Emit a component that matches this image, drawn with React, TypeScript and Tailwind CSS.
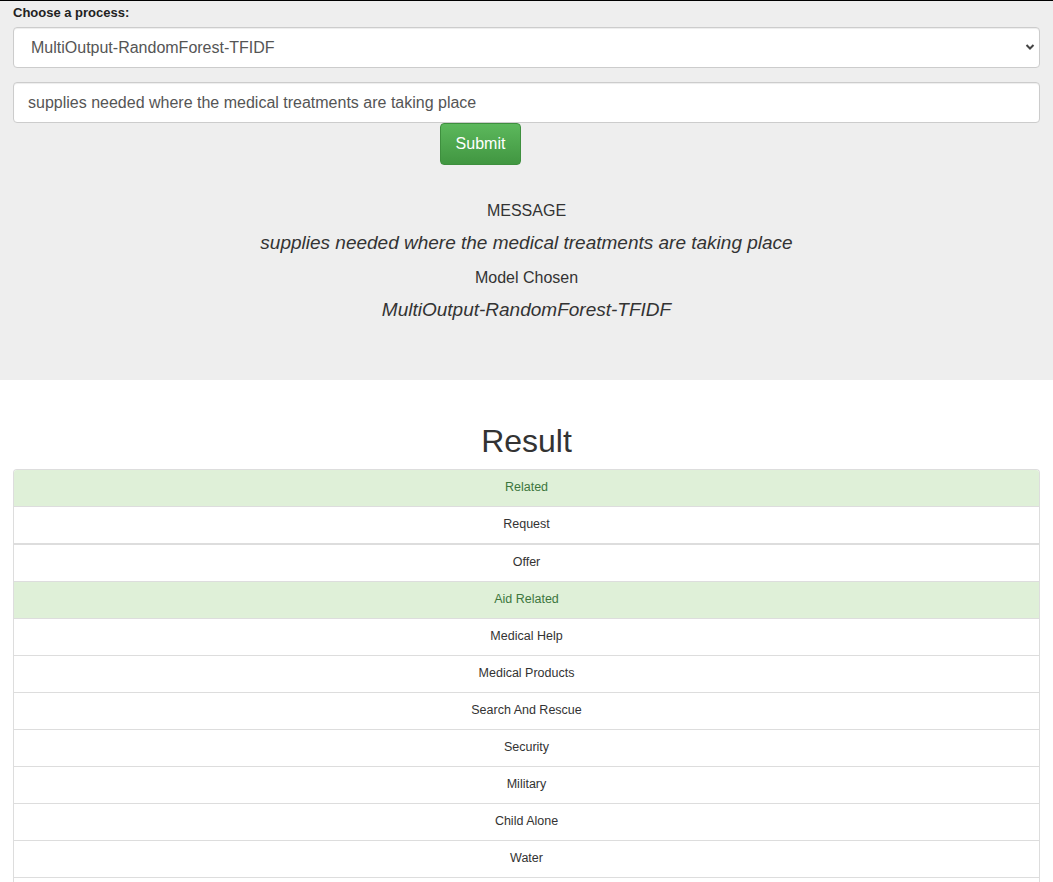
const categories = [
  { name: 'Related', hit: true },
  { name: 'Request', hit: false },
  { name: 'Offer', hit: false },
  { name: 'Aid Related', hit: true },
  { name: 'Medical Help', hit: false },
  { name: 'Medical Products', hit: false },
  { name: 'Search And Rescue', hit: false },
  { name: 'Security', hit: false },
  { name: 'Military', hit: false },
  { name: 'Child Alone', hit: false },
  { name: 'Water', hit: false },
  { name: 'Food', hit: false },
]

export default function App() {
  const message = 'supplies needed where the medical treatments are taking place'
  const model = 'MultiOutput-RandomForest-TFIDF'

  return (
    <div className="min-h-screen bg-white text-[#333] font-['Liberation_Sans',Arial,sans-serif]">
      <div className="bg-[#eeeeee] border-t border-black h-[380px] px-[13px]">
        <label className="block pt-[3px] text-[13px] font-bold leading-[18px] text-[#222]">Choose a process:</label>

        <div className="mt-[5px] relative">
          <select
            defaultValue={model}
            className="w-full h-[41px] appearance-none bg-white border border-[#ccc] rounded-[4px] pl-[17px] pr-8 text-[16px] text-[#555] shadow-[inset_0_1px_1px_rgba(0,0,0,0.075)] outline-none"
          >
            <option>{model}</option>
          </select>
          <svg
            className="absolute right-[5px] top-[16px] pointer-events-none"
            width="10"
            height="8"
            viewBox="0 0 10 8"
          >
            <path d="M1.5 2 L5 5.5 L8.5 2" stroke="#444" strokeWidth="2" fill="none" />
          </svg>
        </div>

        <input
          defaultValue={message}
          className="block w-full mt-[14px] h-[41px] bg-white border border-[#ccc] rounded-[4px] px-[14px] text-[16px] text-[#555] shadow-[inset_0_1px_1px_rgba(0,0,0,0.075)] outline-none"
        />

        <button className="ml-[427px] h-[42px] w-[81px] rounded-[4px] border border-[#3e8f3e] bg-gradient-to-b from-[#5cb85c] to-[#419641] text-white text-[16px]">
          Submit
        </button>

        <div className="mt-[35px] flex flex-col items-center">
          <p className="text-[16px] leading-[22px]">MESSAGE</p>
          <p className="mt-[9px] text-[19px] italic leading-[24px]">{message}</p>
          <p className="mt-[12px] text-[16px] leading-[22px]">Model Chosen</p>
          <p className="mt-[9px] text-[19px] italic leading-[24px]">{model}</p>
        </div>
      </div>

      <div className="px-[13px]">
        <h1 className="pt-[41px] text-center text-[32px] leading-[40px] text-[#333]">Result</h1>
        <div className="mt-[8px] border-x border-t border-[#ddd] rounded-t-[4px] overflow-hidden">
          {categories.map((c, i) => (
            <div
              key={c.name}
              className={`flex items-center justify-center pb-[1px] text-[12.5px] ${
                i === 1 ? 'h-[38px] border-b-2' : 'h-[37px] border-b'
              } border-[#ddd] ${c.hit ? 'bg-[#dff0d8] text-[#3c763d]' : 'bg-white text-[#333]'}`}
            >
              {c.name}
            </div>
          ))}
        </div>
      </div>
    </div>
  )
}
